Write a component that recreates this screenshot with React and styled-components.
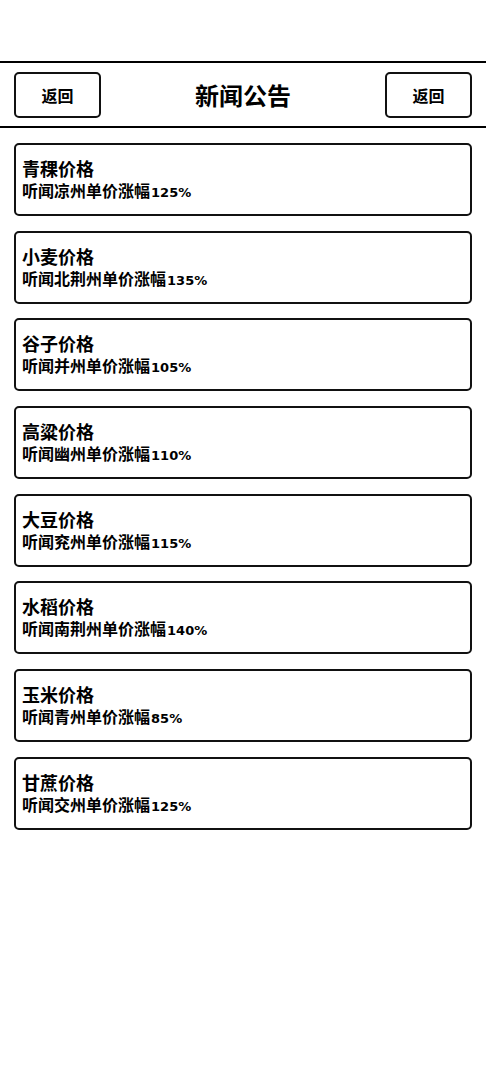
import React from 'react';
import styled, { createGlobalStyle } from 'styled-components';

const GlobalStyle = createGlobalStyle`
  html, body {
    margin: 0;
    padding: 0;
    background: #fff;
  }
  body {
    font-family: "Noto Sans CJK SC", sans-serif;
    color: #000;
  }
`;

const Page = styled.div`
  width: 486px;
  padding-top: 61px;
`;

const Header = styled.header`
  display: flex;
  align-items: center;
  justify-content: space-between;
  height: 63px;
  padding: 0 14px;
  border-top: 2px solid #000;
  border-bottom: 2px solid #000;
`;

const BackButton = styled.button`
  width: 87px;
  height: 46px;
  border: 2px solid #111;
  border-radius: 5px;
  background: #fff;
  font-family: "Noto Sans CJK SC", sans-serif;
  font-size: 16px;
  font-weight: 700;
  color: #000;
  padding: 0;
`;

const Title = styled.h1`
  margin: 0;
  font-family: "Noto Sans CJK SC", sans-serif;
  font-size: 24px;
  font-weight: 700;
`;

const List = styled.div`
  display: flex;
  flex-direction: column;
  gap: 14.7px;
  padding: 15px 14px 0;
`;

const Card = styled.div`
  height: 73px;
  box-sizing: border-box;
  border: 2px solid #111;
  border-radius: 5px;
  padding: 11px 6px 0;
  display: flex;
  flex-direction: column;
`;

const CardTitle = styled.div`
  font-size: 18px;
  font-weight: 700;
  line-height: 25px;
`;

const CardText = styled.div`
  font-size: 16px;
  font-weight: 700;
  line-height: 18px;
`;

const Rate = styled.span`
  font-family: "DejaVu Sans", sans-serif;
  font-size: 13px;
  font-weight: 700;
  margin-left: 1px;
`;

const items = [
  { name: '青稞', place: '凉州', rate: '125' },
  { name: '小麦', place: '北荆州', rate: '135' },
  { name: '谷子', place: '并州', rate: '105' },
  { name: '高粱', place: '幽州', rate: '110' },
  { name: '大豆', place: '兖州', rate: '115' },
  { name: '水稻', place: '南荆州', rate: '140' },
  { name: '玉米', place: '青州', rate: '85' },
  { name: '甘蔗', place: '交州', rate: '125' },
];

const App = () => (
  <Page>
    <GlobalStyle />
    <Header>
      <BackButton>返回</BackButton>
      <Title>新闻公告</Title>
      <BackButton>返回</BackButton>
    </Header>
    <List>
      {items.map((item) => (
        <Card key={item.name}>
          <CardTitle>{item.name}价格</CardTitle>
          <CardText>
            听闻{item.place}单价涨幅<Rate>{item.rate}%</Rate>
          </CardText>
        </Card>
      ))}
    </List>
  </Page>
);

export default App;
